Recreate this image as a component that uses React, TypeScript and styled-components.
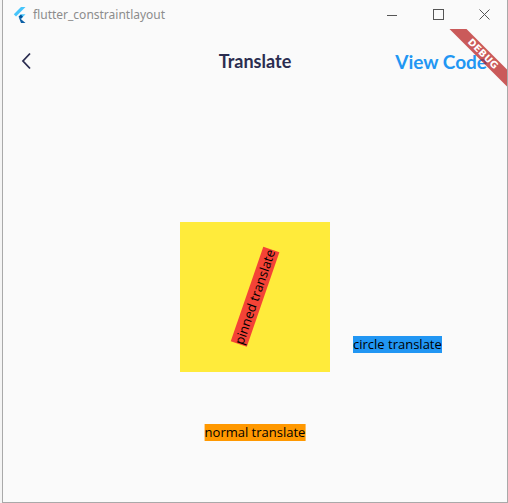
import React from 'react'
import styled, { createGlobalStyle } from 'styled-components'

const Global = createGlobalStyle`
  html, body {
    margin: 0;
    padding: 0;
    background: #e9e9e9;
    overflow: hidden;
  }
`

const Desk = styled.div`
  width: 508px;
  height: 503px;
  display: flex;
  background: #f4f4f4;
`

const Window = styled.div`
  margin-left: 2px;
  width: 506px;
  height: 503px;
  box-sizing: border-box;
  border: 1px solid #a9a9a9;
  border-top: none;
  background: #fafafa;
  display: flex;
  flex-direction: column;
`

const TitleBar = styled.div`
  height: 29px;
  flex-shrink: 0;
  display: flex;
  align-items: center;
  padding-left: 10px;
  background: #fafafa;
`

const TitleText = styled.span`
  margin-left: 7px;
  font-family: 'Noto Sans', sans-serif;
  font-size: 12px;
  color: #8c8c8c;
`

const Controls = styled.div`
  margin-left: auto;
  display: flex;
  height: 100%;
`

const CtrlButton = styled.div`
  width: 46px;
  height: 100%;
  display: flex;
  align-items: center;
  justify-content: center;
`

const Content = styled.div`
  position: relative;
  flex: 1;
  overflow: hidden;
  display: flex;
  flex-direction: column;
`

const AppBar = styled.div`
  height: 64px;
  flex-shrink: 0;
  display: grid;
  grid-template-columns: 1fr auto 1fr;
  align-items: center;
  font-family: Lato, 'Open Sans', sans-serif;
`

const Back = styled.div`
  padding-left: 18px;
  display: flex;
  align-items: center;
`

const Title = styled.div`
  font-size: 18px;
  font-weight: 700;
  color: #2b2d50;
`

const ViewCode = styled.div`
  justify-self: end;
  padding-right: 20px;
  font-size: 19px;
  font-weight: 700;
  color: #2196f3;
`

const Body = styled.div`
  flex: 1;
  display: flex;
  align-items: center;
  justify-content: center;
  padding-bottom: 2px;
`

const YellowBox = styled.div`
  position: relative;
  width: 150px;
  height: 150px;
  background: #ffeb3b;
`

const Label = styled.div<{ $bg: string }>`
  position: absolute;
  background: ${(p) => p.$bg};
  color: #000;
  font-family: 'Open Sans', sans-serif;
  font-size: 13px;
  line-height: 17px;
  white-space: nowrap;
`

const Pinned = styled(Label)`
  left: 50%;
  top: 50%;
  transform: translate(-50%, -50%) rotate(-71deg);
`

const Circle = styled(Label)`
  left: calc(100% + 23px);
  top: 114px;
`

const Normal = styled(Label)`
  left: 50%;
  top: calc(100% + 52px);
  transform: translateX(-50%);
`

const Banner = styled.div`
  position: absolute;
  left: 420px;
  top: 19px;
  width: 120px;
  height: 12px;
  background: rgba(183, 28, 28, 0.72);
  transform: rotate(45deg);
  color: #fff;
  font-family: 'DejaVu Sans', sans-serif;
  font-weight: 900;
  font-size: 9.5px;
  line-height: 12px;
  letter-spacing: 0.3px;
  text-align: center;
`

function FlutterLogo() {
  return (
    <svg width="13" height="16" viewBox="0 0 13 16">
      <polygon points="8,0 12.5,0 3,9.5 0.8,7.3" fill="#47c5fb" />
      <polygon points="8,7.3 12.5,7.3 7.8,12 5.6,9.8" fill="#47c5fb" />
      <polygon points="5.6,9.8 7.8,12 12.5,16 8,16" fill="#0b5fa5" />
      <polygon points="5.6,9.8 7.8,7.6 10,9.8 7.8,12" fill="#00569e" />
    </svg>
  )
}

export default function App() {
  return (
    <>
      <Global />
      <Desk>
        <Window>
          <TitleBar>
            <FlutterLogo />
            <TitleText>flutter_constraintlayout</TitleText>
            <Controls>
              <CtrlButton>
                <svg width="10" height="10"><line x1="0" y1="5.5" x2="10" y2="5.5" stroke="#555" /></svg>
              </CtrlButton>
              <CtrlButton>
                <svg width="11" height="11"><rect x="0.5" y="0.5" width="10" height="10" fill="none" stroke="#555" /></svg>
              </CtrlButton>
              <CtrlButton>
                <svg width="11" height="11"><path d="M0.5 0.5 L10.5 10.5 M10.5 0.5 L0.5 10.5" stroke="#555" /></svg>
              </CtrlButton>
            </Controls>
          </TitleBar>
          <Content>
            <AppBar>
              <Back>
                <svg width="12" height="18" viewBox="0 0 12 18">
                  <polyline points="9,1.5 2,9 9,16.5" fill="none" stroke="#2b2d50" strokeWidth="1.8" />
                </svg>
              </Back>
              <Title>Translate</Title>
              <ViewCode>View Code</ViewCode>
            </AppBar>
            <Body>
              <YellowBox>
                <Pinned $bg="#f44336">pinned translate</Pinned>
                <Circle $bg="#2196f3">circle translate</Circle>
                <Normal $bg="#ff9800">normal translate</Normal>
              </YellowBox>
            </Body>
            <Banner>DEBUG</Banner>
          </Content>
        </Window>
      </Desk>
    </>
  )
}
